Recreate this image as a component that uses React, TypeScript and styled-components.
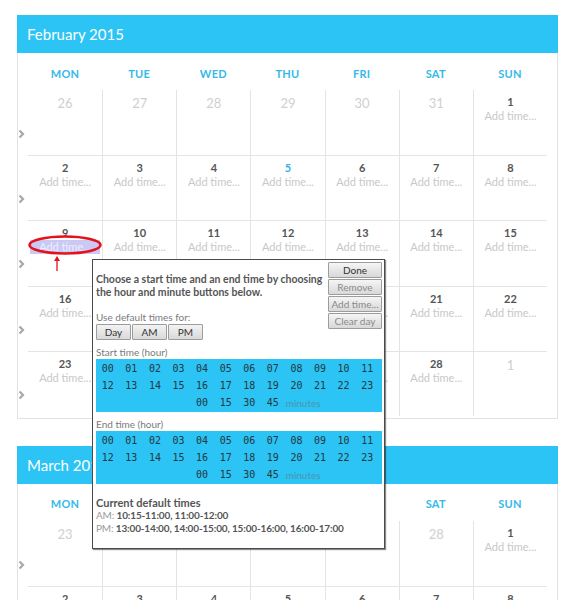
import React from 'react';
import styled, { createGlobalStyle } from 'styled-components';

const BLUE = '#2bc4f4';

const GlobalStyle = createGlobalStyle`
  html, body {
    margin: 0;
    padding: 0;
    overflow: hidden;
    background: #fff;
  }
  body {
    font-family: Lato, "Open Sans", sans-serif;
  }
`;

interface Day {
  date: number;
  inMonth: boolean;
  key: string;
  isToday: boolean;
  isSelected: boolean;
}

const buildWeeks = (year: number, month: number): Day[][] => {
  const first = new Date(year, month, 1);
  const offset = (first.getDay() + 6) % 7;
  const cursor = new Date(year, month, 1 - offset);
  const weeks: Day[][] = [];
  do {
    const week: Day[] = [];
    for (let i = 0; i < 7; i++) {
      week.push({
        date: cursor.getDate(),
        inMonth: cursor.getMonth() === month,
        key: cursor.toDateString(),
        isToday: cursor.getFullYear() === 2015 && cursor.getMonth() === 1 && cursor.getDate() === 5,
        isSelected: cursor.getFullYear() === 2015 && cursor.getMonth() === 1 && cursor.getDate() === 9,
      });
      cursor.setDate(cursor.getDate() + 1);
    }
    weeks.push(week);
  } while (cursor.getMonth() === month);
  return weeks;
};

const DAY_NAMES = ['MON', 'TUE', 'WED', 'THU', 'FRI', 'SAT', 'SUN'];
const HOURS = Array.from({ length: 24 }, (_, i) => String(i).padStart(2, '0'));
const MINUTES = ['00', '15', '30', '45'];

const Chevron = () => (
  <svg width="7" height="10" viewBox="0 0 7 10">
    <path d="M1.5 1.5 L5 5 L1.5 8.5" fill="none" stroke="#a8a8a8" strokeWidth="2.2" />
  </svg>
);

const Month = ({ title, year, month }: { title: string; year: number; month: number }) => {
  const weeks = buildWeeks(year, month);
  return (
    <Calendar>
      <Header>{title}</Header>
      <Body>
        <DayNames>
          <span />
          {DAY_NAMES.map((d) => (
            <DayName key={d}>{d}</DayName>
          ))}
          <span />
        </DayNames>
        {weeks.map((week, wi) => (
          <Week key={wi}>
            <ArrowCell>
              <Chevron />
            </ArrowCell>
            {week.map((day, di) => (
              <DayCell key={day.key} $left={di > 0} $top={wi > 0}>
                {day.inMonth ? (
                  <>
                    <DayNumber $today={day.isToday}>{day.date}</DayNumber>
                    <AddTime $selected={day.isSelected}>Add time...</AddTime>
                  </>
                ) : (
                  <OtherNumber>{day.date}</OtherNumber>
                )}
                {day.isSelected && (
                  <>
                    <Ring width="76" height="22" viewBox="0 0 76 22">
                      <ellipse cx="37" cy="11" rx="35.5" ry="8.5" fill="none" stroke="#e3121c" strokeWidth="2.6" />
                    </Ring>
                    <Pointer width="8" height="16" viewBox="0 0 8 16">
                      <line x1="4" y1="15" x2="4" y2="4" stroke="#e3121c" strokeWidth="1.3" />
                      <polygon points="4,0 1,5 7,5" fill="#e3121c" />
                    </Pointer>
                  </>
                )}
              </DayCell>
            ))}
            <span />
          </Week>
        ))}
      </Body>
    </Calendar>
  );
};

const TimeGrid = () => (
  <Grid>
    {HOURS.map((h) => (
      <Num key={h}>{h}</Num>
    ))}
    <GridGap />
    {MINUTES.map((m) => (
      <Num key={'m' + m}>{m}</Num>
    ))}
    <MinutesLabel>minutes</MinutesLabel>
  </Grid>
);

const TimePopup = () => (
  <Popup>
    <PopupTop>
      <Intro>
        <Lead>
          Choose a start time and an end time by choosing
          <br />
          the hour and minute buttons below.
        </Lead>
        <Label $gap={11}>Use default times for:</Label>
        <PresetRow>
          <PresetButton>Day</PresetButton>
          <PresetButton>AM</PresetButton>
          <PresetButton>PM</PresetButton>
        </PresetRow>
      </Intro>
      <Actions>
        <ActionButton>Done</ActionButton>
        <ActionButton $muted>Remove</ActionButton>
        <ActionButton $muted>Add time...</ActionButton>
        <ActionButton $muted>Clear day</ActionButton>
      </Actions>
    </PopupTop>
    <Label $gap={5}>Start time (hour)</Label>
    <TimeGrid />
    <Label $gap={5}>End time (hour)</Label>
    <TimeGrid />
    <Defaults>
      <DefaultsTitle>Current default times</DefaultsTitle>
      <DefaultsLine>
        <Muted>AM: </Muted>10:15-11:00, 11:00-12:00
      </DefaultsLine>
      <DefaultsLine>
        <Muted>PM: </Muted>13:00-14:00, 14:00-15:00, 15:00-16:00, 16:00-17:00
      </DefaultsLine>
    </Defaults>
  </Popup>
);

const App = () => {
  return (
    <Page>
      <GlobalStyle />
      <Month title="February 2015" year={2015} month={1} />
      <Month title="March 2015" year={2015} month={2} />
      <TimePopup />
    </Page>
  );
};
export default App;

const Page = styled.div`
  position: relative;
  padding: 15px 0 0 17px;
`;
const Calendar = styled.div`
  width: 541px;
  margin-bottom: 27px;
`;
const Header = styled.div`
  height: 38px;
  background-color: ${BLUE};
  color: #fff;
  font-size: 15px;
  line-height: 38px;
  padding-left: 10px;
`;
const Body = styled.div`
  border: 1px solid #e2e2e2;
  border-top: none;
  padding-bottom: 2px;
`;
const DayNames = styled.div`
  display: grid;
  grid-template-columns: 10px repeat(7, 1fr) 10px;
  height: 37px;
  align-items: center;
`;
const DayName = styled.div`
  text-align: center;
  color: #35b9e9;
  font-weight: bold;
  font-size: 11px;
  letter-spacing: 0.3px;
  padding-top: 3px;
`;
const Week = styled.div`
  display: grid;
  grid-template-columns: 10px repeat(7, 1fr) 10px;
  height: 65.2px;
`;
const ArrowCell = styled.div`
  display: flex;
  align-items: flex-start;
  padding-top: 39px;
`;
const DayCell = styled.div<{ $left: boolean; $top: boolean }>`
  position: relative;
  text-align: center;
  padding-top: 5px;
  border-left: ${(p) => (p.$left ? '1px solid #e4e4e4' : 'none')};
  border-top: ${(p) => (p.$top ? '1px solid #e4e4e4' : 'none')};
`;
const DayNumber = styled.div<{ $today: boolean }>`
  font-size: 11px;
  font-weight: bold;
  line-height: 14px;
  color: ${(p) => (p.$today ? '#32b3e6' : '#555')};
`;
const OtherNumber = styled.div`
  font-size: 13px;
  line-height: 16px;
  color: #cfcfcf;
`;
const AddTime = styled.div<{ $selected: boolean }>`
  font-size: 11px;
  line-height: 14px;
  color: ${(p) => (p.$selected ? '#eef' : '#c8c8c8')};
  background: ${(p) => (p.$selected ? '#c9c9f4' : 'transparent')};
  margin: 0 2px;
`;
const Ring = styled.svg`
  position: absolute;
  left: 0;
  top: 13px;
`;
const Pointer = styled.svg`
  position: absolute;
  left: 25px;
  top: 35px;
`;
const Popup = styled.div`
  position: absolute;
  left: 92px;
  top: 259px;
  width: 286px;
  background: #fff;
  border: 1px solid #4a4a4a;
  box-shadow: 1px 1px 1px rgba(0, 0, 0, 0.45);
  padding: 2px 2px 13px 3px;
  color: #555;
`;
const PopupTop = styled.div`
  display: flex;
  justify-content: space-between;
`;
const Intro = styled.div`
  display: flex;
  flex-direction: column;
  align-items: flex-start;
`;
const Lead = styled.div`
  margin-top: 11px;
  font-size: 10.5px;
  font-weight: bold;
  line-height: 13px;
  white-space: nowrap;
`;
const Label = styled.div<{ $gap: number }>`
  margin-top: ${(p) => p.$gap}px;
  font-size: 10px;
  line-height: 14px;
  color: #7a7a7a;
`;
const PresetRow = styled.div`
  display: flex;
  gap: 1px;
`;
const PresetButton = styled.button`
  width: 35px;
  height: 16px;
  padding: 0;
  font-family: Lato, sans-serif;
  font-size: 10px;
  color: #333;
  border: 1px solid #9c9c9c;
  border-radius: 1px;
  background: linear-gradient(#f3f3f3, #d9d9d9);
`;
const Actions = styled.div`
  display: flex;
  flex-direction: column;
  gap: 1px;
  width: 54px;
`;
const ActionButton = styled.button<{ $muted?: boolean }>`
  height: 16px;
  padding: 0;
  font-family: Lato, sans-serif;
  font-size: 10px;
  color: ${(p) => (p.$muted ? '#8a8a8a' : '#333')};
  border: 1px solid #9c9c9c;
  border-radius: 1px;
  background: linear-gradient(#f5f5f5, #d8d8d8);
`;
const Grid = styled.div`
  display: grid;
  grid-template-columns: repeat(12, 1fr);
  grid-auto-rows: 17px;
  align-items: center;
  padding: 1px 3px 1px 0;
  background: ${BLUE};
`;
const Num = styled.div`
  text-align: center;
  font-family: "DejaVu Sans Mono", monospace;
  font-size: 10px;
  color: #26363d;
`;
const GridGap = styled.div`
  grid-column: span 4;
`;
const MinutesLabel = styled.div`
  grid-column: span 4;
  font-size: 10px;
  color: #4f93ae;
  padding-left: 1px;
`;
const Defaults = styled.div`
  margin-top: 12px;
  font-size: 10px;
  font-weight: bold;
  line-height: 13px;
  letter-spacing: -0.15px;
  color: #555;
`;
const DefaultsTitle = styled.div`
  font-size: 11px;
  letter-spacing: 0;
`;
const DefaultsLine = styled.div`
  white-space: nowrap;
`;
const Muted = styled.span`
  font-weight: normal;
  color: #9a9a9a;
`;
